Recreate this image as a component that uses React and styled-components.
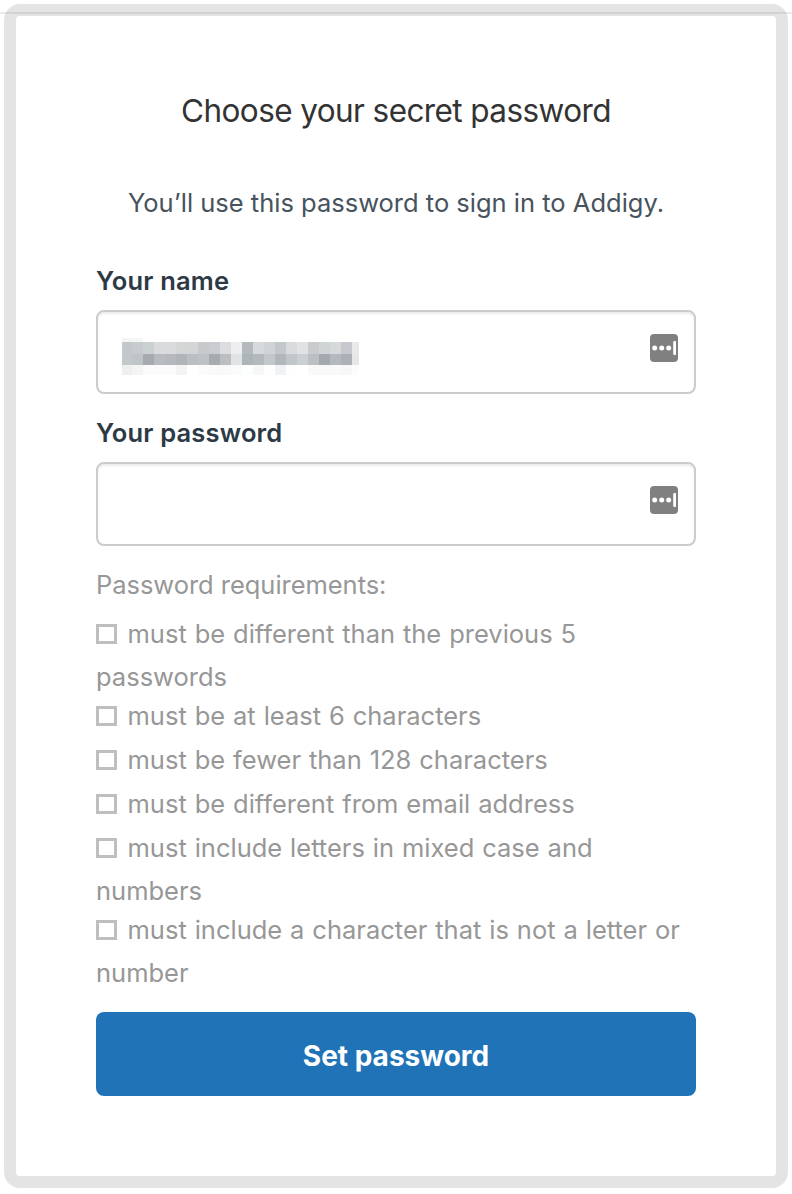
import React from "react";
import styled, { createGlobalStyle } from "styled-components";

const GlobalStyle = createGlobalStyle`
  * { box-sizing: border-box; }
  body {
    margin: 0;
    background: #fff;
    font-family: Inter, "Liberation Sans", sans-serif;
    font-size: 25.5px;
  }
`;

const Page = styled.main`
  position: relative;
  height: 1194px;
  padding: 4px;
`;

const TopRule = styled.div`
  position: absolute;
  left: 0;
  right: 0;
  top: 12px;
  height: 2px;
  background: rgba(0, 0, 0, 0.08);
`;

const Frame = styled.div`
  width: 784px;
  height: 1184px;
  padding: 12px;
  border-radius: 16px;
  background: #e4e4e4;
`;

const Panel = styled.form`
  display: flex;
  flex-direction: column;
  width: 760px;
  height: 1160px;
  padding: 75px 80px 80px;
  border-radius: 4px;
  background: #fff;
`;

const Title = styled.h1`
  margin: 0;
  font-size: 31.5px;
  line-height: 40px;
  font-weight: 400;
  text-align: center;
  color: #333;
  letter-spacing: -0.59px;
`;

const Intro = styled.p`
  margin: 52px 0 0;
  line-height: 40px;
  text-align: center;
  color: #47535d;
`;

const Label = styled.label`
  margin-top: ${(p) => p.$top}px;
  line-height: 40px;
  font-weight: 600;
  color: #2d3a45;
  letter-spacing: 0.17px;
`;

const Field = styled.div`
  display: flex;
  justify-content: ${(p) => (p.$filled ? "space-between" : "flex-end")};
  height: 84px;
  margin-top: 9px;
  padding: 22px 16px 0 24px;
  border: 2px solid #ccc;
  border-radius: 8px;
  box-shadow: inset 0 2px 2px rgba(0, 0, 0, 0.075);
`;

const Mosaic = styled.div`
  display: grid;
  grid-template-columns: 10px repeat(20, 11px) 7px;
  grid-template-rows: 4px 12px 11px 10px;
  margin-top: 4px;
`;

const Cell = styled.i`
  background: ${(p) => p.$color};
`;

const Icon = styled.svg`
  display: block;
  width: 28px;
  height: 28px;
`;

const Heading = styled.p`
  margin: 19px 0 0;
  line-height: 40px;
  color: #979797;
  letter-spacing: -0.04px;
`;

const List = styled.ul`
  margin: 9px 0 0;
  padding: 0;
  list-style: none;
`;

const Item = styled.li`
  line-height: 38px;
  color: #979797;
  word-spacing: 0.75px;
`;

const Box = styled.span`
  display: inline-block;
  width: 21px;
  height: 20px;
  margin: 10px 10.5px 14px 0;
  vertical-align: -15px;
  border: 3px solid #bfbfbf;
`;

const Button = styled.button`
  height: 84px;
  margin-top: 20px;
  padding: 4px 0 0;
  border: 0;
  border-radius: 8px;
  background: #2173b8;
  color: #fff;
  font: 700 28px Inter, "Liberation Sans", sans-serif;
`;

const mosaic = [
  "#f3f5f5 #f5f7f7 #fff #fff #fff #fff #fff #fff #fff #fff #fff #fff #fff #fff #fff #fff #fff #fff #fff #fff #fff #fff",
  "#c3c8cb #c7cbce #cbd0d2 #dadbdd #dadbdd #d3d8d7 #d3d5d7 #c6cacd #c9ccd0 #dddde0 #edeef0 #b4babc #d6dadd #d0d4d7 #c3c8cb #dadbde #e1e2e4 #c8cccf #cfd4d6 #d5d9d9 #c7c8cd #e9e9eb",
  "#c3c8cb #bfc4c6 #a5abaf #b8bcc0 #b5b9bd #b0b5b8 #bbbfc3 #bdc2c5 #a5abaf #bbbfc2 #e2e3e5 #adb5b6 #b4b9bd #c3c8cb #b2b7bc #c1c6c9 #cbcfd3 #bbc0c3 #a3a9ae #b4b9bd #adb0b6 #e6e7e9",
  "#efefef #f4f4f4 #fbfbfb #fbfbfb #fbfbfb #f4f4f4 #fff #fbfbfb #f9f9f9 #f9f9f9 #fbfbfb #fdfffe #f7f7f7 #fefefe #f0f2f5 #fdfffe #fff #f9f9f9 #f9f9f9 #f9f9f9 #f7f7f7 #fcfcfc",
].join(" ").split(" ");

const requirements = [
  "must be different than the previous 5 passwords",
  "must be at least 6 characters",
  "must be fewer than 128 characters",
  "must be different from email address",
  "must include letters in mixed case and numbers",
  "must include a character that is not a letter or number",
];

function PasswordIcon() {
  return (
    <Icon viewBox="0 0 28 28" aria-hidden="true">
      <rect width="28" height="28" rx="4" fill="#808080" />
      <g fill="#fff">
        <circle cx="4.7" cy="14" r="2.5" />
        <circle cx="11.7" cy="14" r="2.5" />
        <circle cx="18.7" cy="14" r="2.5" />
        <rect x="23.2" y="7" width="2.8" height="14" rx="1" />
      </g>
    </Icon>
  );
}

export default function App() {
  return (
    <Page>
      <GlobalStyle />
      <Frame>
        <Panel>
          <Title>Choose your secret password</Title>
          <Intro>You’ll use this password to sign in to Addigy.</Intro>
          <Label $top={38}>Your name</Label>
          <Field $filled>
            <Mosaic>
              {mosaic.map((color, i) => <Cell key={i} $color={color} />)}
            </Mosaic>
            <PasswordIcon />
          </Field>
          <Label $top={19}>Your password</Label>
          <Field>
            <PasswordIcon />
          </Field>
          <Heading>Password requirements:</Heading>
          <List>
            {requirements.map((text) => (
              <Item key={text}><Box />{text}</Item>
            ))}
          </List>
          <Button type="button">Set password</Button>
        </Panel>
      </Frame>
      <TopRule />
    </Page>
  );
}
